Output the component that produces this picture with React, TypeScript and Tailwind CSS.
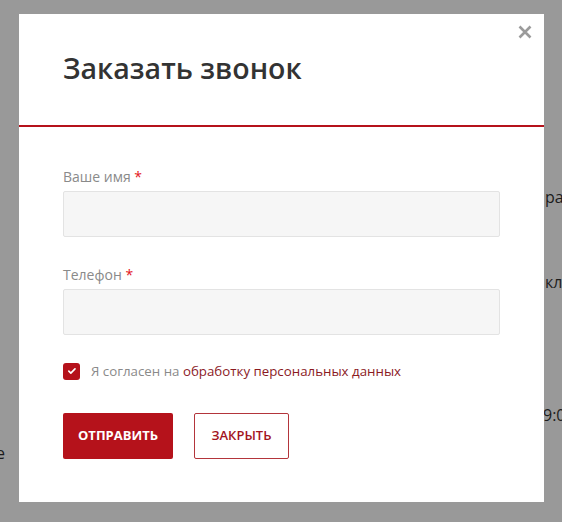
import * as React from "react";

const font = { fontFamily: '"Open Sans", "Noto Sans", sans-serif' };

function Field({ label }: { label: string }) {
  return (
    <div className="flex flex-col">
      <label className="text-[14px] leading-[20px] text-[#8a8a8a]">
        {label} <span className="text-[#e3141b]">*</span>
      </label>
      <input
        type="text"
        className="mt-[4px] h-[46px] w-full rounded-[2px] border border-[#e3e3e3] bg-[#f6f6f6] px-3 outline-none"
      />
    </div>
  );
}

export default function App() {
  const [agree, setAgree] = React.useState(true);

  return (
    <div className="relative h-[522px] w-[562px] overflow-hidden bg-[#999999]" style={font}>
      {/* dimmed page behind the popup */}
      <div className="flex flex-col text-[16px] leading-[22px] text-[#1c1c1c]">
        <div className="ml-[545px] mt-[186px] whitespace-nowrap">ра</div>
        <div className="ml-[545px] mt-[63px] whitespace-nowrap">кл</div>
        <div className="ml-[543px] mt-[111px] whitespace-nowrap">9:0</div>
        <div className="-ml-[4px] mt-[16px] whitespace-nowrap">е</div>
      </div>

      <div className="absolute left-[19px] top-[14px] h-[488px] w-[525px] bg-white">
        <button
          type="button"
          className="absolute right-[11px] top-[10px] flex h-[16px] w-[16px] items-center justify-center text-[#9b9b9b]"
        >
          <svg viewBox="0 0 16 16" className="h-[16px] w-[16px]" fill="none" stroke="currentColor" strokeWidth="2.6">
            <path d="M2.5 2.5l11 11M13.5 2.5l-11 11" />
          </svg>
        </button>

        <div className="h-[113px] border-b-2 border-[#b5121b] px-[44px] pt-[34px]">
          <h2 className="text-[28.5px] leading-[40px] font-semibold text-[#333333]">
            Заказать звонок
          </h2>
        </div>

        <form className="flex flex-col px-[44px] pt-[40px]">
          <Field label="Ваше имя" />
          <div className="mt-[28px]">
            <Field label="Телефон" />
          </div>

          <label className="mt-[27px] flex items-center gap-[11px] text-[13.3px] leading-[18px]">
            <button
              type="button"
              onClick={() => setAgree((a) => !a)}
              className="flex h-[17px] w-[17px] items-center justify-center rounded-[3px] bg-[#b5121b]"
            >
              {agree && (
                <svg viewBox="0 0 12 12" className="h-[10px] w-[10px]" fill="none" stroke="white" strokeWidth="2" strokeLinecap="round" strokeLinejoin="round">
                  <path d="M2.2 6.2l2.4 2.3 5-5" />
                </svg>
              )}
            </button>
            <span className="text-[#8a8a8a]">
              Я согласен на <a className="text-[#8b1a1f]">обработку персональных данных</a>
            </span>
          </label>

          <div className="mt-[33px] flex gap-[21px]">
            <button
              type="button"
              className="h-[46px] w-[110px] rounded-[2px] bg-[#b5121b] text-[13px] font-bold text-white"
            >
              ОТПРАВИТЬ
            </button>
            <button
              type="button"
              className="h-[46px] w-[95px] rounded-[2px] border border-[#b3353b] bg-white text-[13px] font-semibold text-[#a3161e]"
            >
              ЗАКРЫТЬ
            </button>
          </div>
        </form>
      </div>
    </div>
  );
}
